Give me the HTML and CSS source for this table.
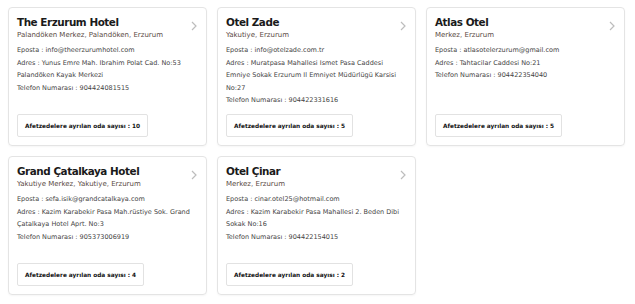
FILE: index.html
```html
<!DOCTYPE html>
<html lang="tr">
<head>
<meta charset="utf-8">
<link rel="stylesheet" href="styles.css">
</head>
<body>
<div class="grid">
  <div class="card">
    <svg class="chev" viewBox="0 0 6 10"><path d="M1 1 L5 5 L1 9" fill="none" stroke="#bdbdbd" stroke-width="1.2"/></svg>
    <div class="title">The Erzurum Hotel</div>
    <div class="sub">Palandöken Merkez, Palandöken, Erzurum</div>
    <div class="info">
      <div class="line">Eposta : info@theerzurumhotel.com</div>
      <div class="line">Adres : Yunus Emre Mah. Ibrahim Polat Cad. No:53 Palandöken Kayak Merkezi</div>
      <div class="line">Telefon Numarası : 904424081515</div>
    </div>
    <div class="btn">Afetzedelere ayrılan oda sayısı : 10</div>
  </div>
  <div class="card">
    <svg class="chev" viewBox="0 0 6 10"><path d="M1 1 L5 5 L1 9" fill="none" stroke="#bdbdbd" stroke-width="1.2"/></svg>
    <div class="title">Otel Zade</div>
    <div class="sub">Yakutiye, Erzurum</div>
    <div class="info">
      <div class="line">Eposta : info@otelzade.com.tr</div>
      <div class="line">Adres : Muratpasa Mahallesi Ismet Pasa Caddesi Emniye Sokak Erzurum Il Emniyet Müdürlügü Karsisi No:27</div>
      <div class="line">Telefon Numarası : 904422331616</div>
    </div>
    <div class="btn">Afetzedelere ayrılan oda sayısı : 5</div>
  </div>
  <div class="card">
    <svg class="chev" viewBox="0 0 6 10"><path d="M1 1 L5 5 L1 9" fill="none" stroke="#bdbdbd" stroke-width="1.2"/></svg>
    <div class="title">Atlas Otel</div>
    <div class="sub">Merkez, Erzurum</div>
    <div class="info">
      <div class="line">Eposta : atlasotelerzurum@gmail.com</div>
      <div class="line">Adres : Tahtacilar Caddesi No:21</div>
      <div class="line">Telefon Numarası : 904422354040</div>
    </div>
    <div class="btn">Afetzedelere ayrılan oda sayısı : 5</div>
  </div>
  <div class="card">
    <svg class="chev" viewBox="0 0 6 10"><path d="M1 1 L5 5 L1 9" fill="none" stroke="#bdbdbd" stroke-width="1.2"/></svg>
    <div class="title">Grand Çatalkaya Hotel</div>
    <div class="sub">Yakutiye Merkez, Yakutiye, Erzurum</div>
    <div class="info">
      <div class="line">Eposta : sefa.isik@grandcatalkaya.com</div>
      <div class="line">Adres : Kazim Karabekir Pasa Mah.rüstiye Sok. Grand Çatalkaya Hotel Aprt. No:3</div>
      <div class="line">Telefon Numarası : 905373006919</div>
    </div>
    <div class="btn">Afetzedelere ayrılan oda sayısı : 4</div>
  </div>
  <div class="card">
    <svg class="chev" viewBox="0 0 6 10"><path d="M1 1 L5 5 L1 9" fill="none" stroke="#bdbdbd" stroke-width="1.2"/></svg>
    <div class="title">Otel Çinar</div>
    <div class="sub">Merkez, Erzurum</div>
    <div class="info">
      <div class="line">Eposta : cinar.otel25@hotmail.com</div>
      <div class="line">Adres : Kazim Karabekir Pasa Mahallesi 2. Beden Dibi Sokak No:16</div>
      <div class="line">Telefon Numarası : 904422154015</div>
    </div>
    <div class="btn">Afetzedelere ayrılan oda sayısı : 2</div>
  </div>
</div>
</body>
</html>
```
FILE: styles.css
```css
html, body {
  margin: 0;
  padding: 0;
  background: #ffffff;
}
body {
  font-family: "DejaVu Sans", "Noto Sans", sans-serif;
  color: #222;
}
.grid {
  display: grid;
  grid-template-columns: 199px 199px 199px;
  grid-auto-rows: 139px;
  column-gap: 10px;
  row-gap: 10px;
  padding: 7px 8px;
}
.card {
  position: relative;
  box-sizing: border-box;
  border: 1px solid #e4e4e4;
  border-radius: 4px;
  box-shadow: 0 1px 2px rgba(0,0,0,0.04);
  padding: 7px 9px 8px 8px;
  display: flex;
  flex-direction: column;
}
.chev {
  position: absolute;
  right: 9px;
  top: 13px;
  width: 6px;
  height: 10px;
}
.title {
  font-size: 10.4px;
  font-weight: 700;
  letter-spacing: -0.45px;
  color: #1a1a1a;
  line-height: 15px;
}
.sub {
  font-size: 7px;
  color: #5a4a3f;
  line-height: 11px;
}
.info {
  margin-top: 3px;
  padding-right: 4px;
}
.line {
  font-size: 6.5px;
  color: #444;
  line-height: 12.6px;
}
.btn {
  margin-top: auto;
  align-self: flex-start;
  box-sizing: border-box;
  height: 23px;
  border: 1px solid #e2e2e2;
  border-radius: 2px;
  padding: 0 7px;
  display: flex;
  align-items: center;
  font-size: 5.8px;
  font-weight: 700;
  color: #111;
}
```
